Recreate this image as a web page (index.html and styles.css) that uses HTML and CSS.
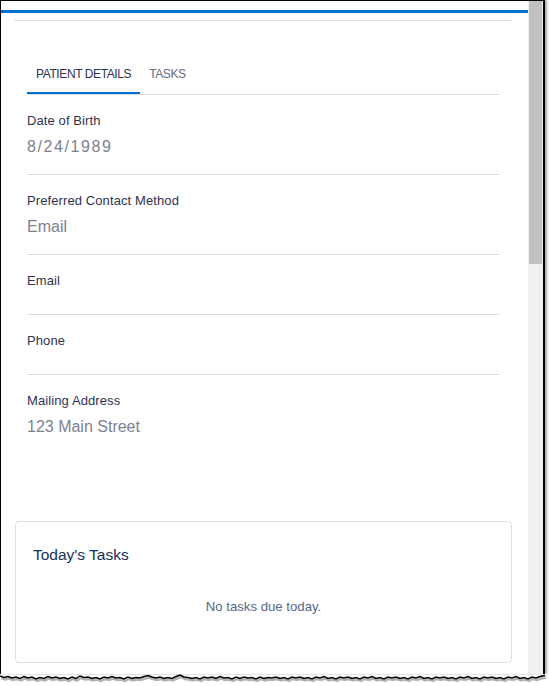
FILE: index.html
```html
<!DOCTYPE html>
<html>
<head>
<meta charset="utf-8">
<link rel="stylesheet" href="styles.css">
</head>
<body>
<div class="frame">
  <div class="content">
    <div class="accent"></div>
    <div class="topline"></div>
    <div class="tabs">
      <div class="tab active">PATIENT DETAILS</div>
      <div class="tab">TASKS</div>
    </div>
    <div class="fields">
      <div class="field">
        <div class="label">Date of Birth</div>
        <div class="value date">8/24/1989</div>
      </div>
      <div class="field">
        <div class="label">Preferred Contact Method</div>
        <div class="value">Email</div>
      </div>
      <div class="field empty">
        <div class="label">Email</div>
      </div>
      <div class="field empty">
        <div class="label">Phone</div>
      </div>
      <div class="field last">
        <div class="label">Mailing Address</div>
        <div class="value">123 Main Street</div>
      </div>
    </div>
    <div class="card">
      <div class="card-title">Today's Tasks</div>
      <div class="card-empty">No tasks due today.</div>
    </div>
  </div>
  <div class="scrollbar"><div class="thumb"></div></div>
</div>
<svg class="torn" width="549" height="12" viewBox="0 0 549 12">
  <path class="torn-shadow" d="M0 2 L4 3.5 L8 2.5 L12 4 L16 3 L20 4.5 L24 2.5 L28 4 L32 3 L36 5 L40 3.5 L44 4.5 L48 2.5 L52 4 L56 3 L60 4.5 L64 3.5 L68 5 L72 3 L76 4.5 L80 2 L84 3.5 L88 3 L92 4.5 L96 3.5 L100 5 L104 3 L108 4 L112 2.5 L116 4 L120 3.5 L124 5 L128 3 L132 4.5 L136 3.5 L140 4 L144 2.5 L148 1.5 L152 3 L156 4 L160 3 L164 4.5 L168 3.5 L172 4.5 L176 2.5 L180 1 L184 3 L188 3.5 L192 4.5 L196 3.5 L200 5 L204 3 L208 4 L212 3 L216 4.5 L220 2.5 L224 4 L228 3.5 L232 5 L236 3 L240 4.5 L244 3 L248 4 L252 3.5 L256 5 L260 3 L264 4.5 L268 3.5 L272 4 L276 3 L280 4.5 L284 3.5 L288 5 L292 3 L296 4 L300 3 L304 4.5 L308 3.5 L312 5 L316 3 L320 4 L324 2.5 L328 4.5 L332 3.5 L336 5 L340 3 L344 4 L348 3 L352 4.5 L356 3.5 L360 5 L364 3 L368 4 L372 2.5 L376 4.5 L380 3.5 L384 5 L388 3 L392 4 L396 3 L400 4.5 L404 3.5 L408 5 L412 3 L416 4 L420 2.5 L424 4.5 L428 3.5 L432 5 L436 3 L440 4 L444 3 L448 4.5 L452 3.5 L456 5 L460 3 L464 4 L468 2.5 L472 4.5 L476 3.5 L480 5 L484 3 L488 4 L492 3 L496 4.5 L500 3.5 L504 5 L508 3 L512 4 L516 2.5 L520 4.5 L524 3.5 L528 5 L532 3 L536 4 L540 2.5 L545 1.5"/>
  <path class="torn-line" d="M0 2 L4 3.5 L8 2.5 L12 4 L16 3 L20 4.5 L24 2.5 L28 4 L32 3 L36 5 L40 3.5 L44 4.5 L48 2.5 L52 4 L56 3 L60 4.5 L64 3.5 L68 5 L72 3 L76 4.5 L80 2 L84 3.5 L88 3 L92 4.5 L96 3.5 L100 5 L104 3 L108 4 L112 2.5 L116 4 L120 3.5 L124 5 L128 3 L132 4.5 L136 3.5 L140 4 L144 2.5 L148 1.5 L152 3 L156 4 L160 3 L164 4.5 L168 3.5 L172 4.5 L176 2.5 L180 1 L184 3 L188 3.5 L192 4.5 L196 3.5 L200 5 L204 3 L208 4 L212 3 L216 4.5 L220 2.5 L224 4 L228 3.5 L232 5 L236 3 L240 4.5 L244 3 L248 4 L252 3.5 L256 5 L260 3 L264 4.5 L268 3.5 L272 4 L276 3 L280 4.5 L284 3.5 L288 5 L292 3 L296 4 L300 3 L304 4.5 L308 3.5 L312 5 L316 3 L320 4 L324 2.5 L328 4.5 L332 3.5 L336 5 L340 3 L344 4 L348 3 L352 4.5 L356 3.5 L360 5 L364 3 L368 4 L372 2.5 L376 4.5 L380 3.5 L384 5 L388 3 L392 4 L396 3 L400 4.5 L404 3.5 L408 5 L412 3 L416 4 L420 2.5 L424 4.5 L428 3.5 L432 5 L436 3 L440 4 L444 3 L448 4.5 L452 3.5 L456 5 L460 3 L464 4 L468 2.5 L472 4.5 L476 3.5 L480 5 L484 3 L488 4 L492 3 L496 4.5 L500 3.5 L504 5 L508 3 L512 4 L516 2.5 L520 4.5 L524 3.5 L528 5 L532 3 L536 4 L540 2.5 L545 1.5"/>
</svg>
</body>
</html>
```

FILE: styles.css
```css
html, body {
  margin: 0;
  padding: 0;
  background: #ffffff;
}
body {
  width: 549px;
  height: 686px;
  overflow: hidden;
  font-family: "Liberation Sans", Arial, sans-serif;
}
.frame {
  display: flex;
  width: 542px;
  height: 673px;
  overflow: hidden;
  border-top: 1px solid #000;
  border-left: 1px solid #000;
  border-right: 2px solid #000;
  box-shadow: 2px 0 2px rgba(0, 0, 0, 0.35);
  background: #fff;
}
.content {
  width: 527px;
  flex: none;
  display: flow-root;
}
.accent {
  margin-top: 9px;
  height: 3px;
  background: #0070d2;
}
.topline {
  margin-top: 7px;
  margin-left: 13px;
  width: 497px;
  height: 1px;
  background: #dcdde6;
}
.tabs {
  display: flex;
  margin-top: 45px;
  margin-left: 26px;
  width: 472px;
  border-bottom: 1px solid #dcdde6;
}
.tab {
  font-size: 12px;
  line-height: 17px;
  letter-spacing: -0.4px;
  padding: 0 9px 9px 9px;
  border-bottom: 2px solid transparent;
  color: #6b6b82;
}
.tab.active {
  color: #2d3150;
  border-bottom-color: #0070d2;
}
.fields {
  margin-left: 26px;
  width: 472px;
}
.field {
  padding: 17px 0 16px 0;
  border-bottom: 1px solid #dcdde6;
}
.field.empty {
  padding-bottom: 25px;
}
.field.last {
  border-bottom: none;
}
.label {
  font-size: 13px;
  line-height: 17px;
  letter-spacing: 0.1px;
  color: #30334f;
}
.value {
  margin-top: 7px;
  font-size: 16px;
  line-height: 22px;
  color: #7d7f93;
}
.value.date {
  letter-spacing: 1.6px;
}
.card {
  margin-top: 67px;
  margin-left: 14px;
  width: 495px;
  border: 1px solid #d8dde6;
  border-radius: 4px;
  padding: 23px 0 46px 0;
}
.card-title {
  padding-left: 17px;
  font-size: 15.5px;
  line-height: 20px;
  color: #16325c;
}
.card-empty {
  margin-top: 33px;
  text-align: center;
  font-size: 13.2px;
  line-height: 18px;
  color: #54698d;
}
.scrollbar {
  width: 15px;
  flex: none;
  background: #f0f0f0;
}
.thumb {
  margin-left: 1px;
  width: 13px;
  height: 263px;
  background: #c1c1c1;
}
.torn {
  display: block;
}
.torn-line {
  fill: none;
  stroke: #000;
  stroke-width: 1.4;
}
.torn-shadow {
  fill: none;
  stroke: rgba(0, 0, 0, 0.3);
  stroke-width: 2.5;
  transform: translate(1px, 2px);
}
```
